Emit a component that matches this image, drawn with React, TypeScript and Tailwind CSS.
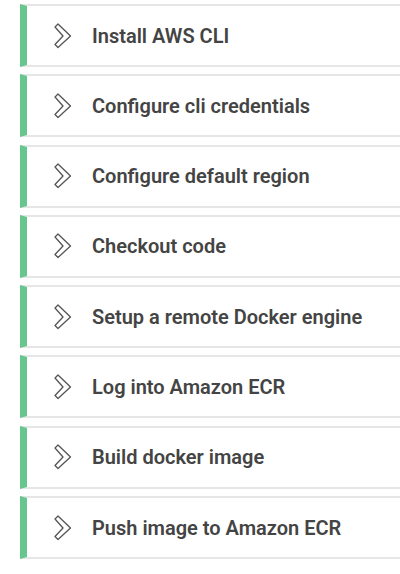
const STEPS = [
  'Install AWS CLI',
  'Configure cli credentials',
  'Configure default region',
  'Checkout code',
  'Setup a remote Docker engine',
  'Log into Amazon ECR',
  'Build docker image',
  'Push image to Amazon ECR',
];

function Chevron() {
  return (
    <svg width="22" height="30" viewBox="0 0 22 30" className="shrink-0">
      <path
        d="M3 6 L6 3 L18.5 15 L6 26.5 L3 23.5 L11 15 Z"
        fill="none"
        stroke="#555"
        strokeWidth={1.3}
        strokeLinejoin="round"
      />
    </svg>
  );
}

export default function App() {
  return (
    <div className="min-h-[574px] w-[400px] bg-white pl-5 pt-1" style={{ fontFamily: 'Roboto, "Liberation Sans", sans-serif' }}>
      <div className="flex flex-col gap-[7.3px]">
        {STEPS.map((step) => (
          <div
            key={step}
            className="flex h-[63px] items-center border-y-2 border-l-[7px] border-y-[#e6e6e6] border-l-[#66c68e] pl-[25px]"
          >
            <Chevron />
            <span className="ml-[18px] whitespace-nowrap text-[20px] font-semibold text-[#444444]">{step}</span>
          </div>
        ))}
      </div>
    </div>
  );
}
